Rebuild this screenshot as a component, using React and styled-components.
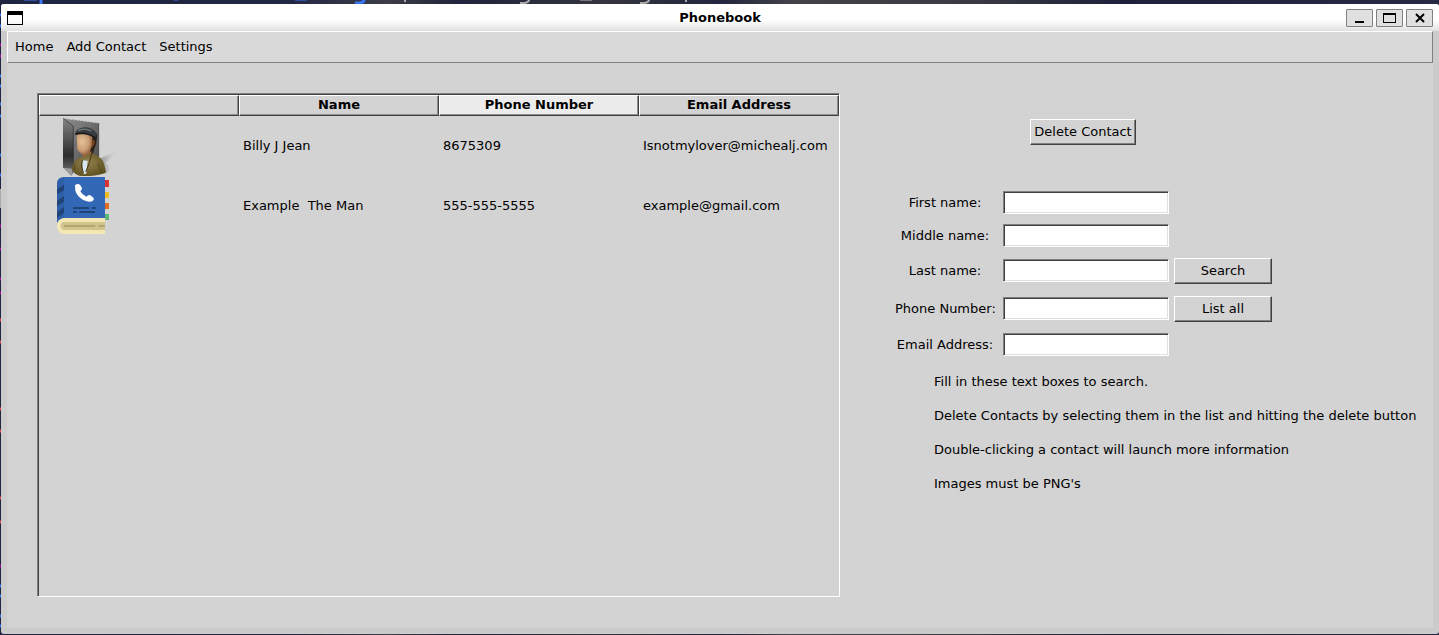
import React from "react";
import styled, { createGlobalStyle } from "styled-components";

const GlobalStyle = createGlobalStyle`
  * { box-sizing: border-box; }
  html, body, #root { height: 100%; }
  body {
    margin: 0;
    background: #242838;
    color: #000;
    font: 13px/16px "DejaVu Sans", sans-serif;
  }
  button, input { font: inherit; color: inherit; margin: 0; }
`;

const Desktop = styled.div`
  position: relative;
  display: flex;
  min-height: 100%;
  padding: 4px 0 1px 1px;
  background: linear-gradient(90deg, #1f2440, #222744 20%, #3d3d47 27%, #20243c 32%, #35353f 42%, #22263e 50%, #42424a 55%, #3a3a44 68%, #1d213a 78%, #262a42);
`;

const TerminalEdge = styled.svg`
  position: absolute;
  top: 0;
  left: 0;
`;

const Window = styled.main`
  position: relative;
  flex: 1;
  display: flex;
  flex-direction: column;
  background: #cbcbcb;
  border-radius: 3px;
`;

const TitleBar = styled.header`
  display: flex;
  align-items: center;
  height: 27px;
  padding: 0 6px;
  background: linear-gradient(#fff 60%, #e0e0e0);
  border-radius: 3px 3px 0 0;
`;

const TitleSide = styled.div`
  flex: 1;
  display: flex;
  gap: 3px;
  justify-content: ${(p) => (p.$end ? "flex-end" : "flex-start")};
`;

const Title = styled.h1`
  margin: 0;
  font-size: 13px;
  line-height: 16px;
  font-weight: bold;
`;

const ControlButton = styled.button`
  display: grid;
  place-items: center;
  width: 27px;
  height: 18px;
  padding: 0;
  background: #e0e0e0;
  border: 1px solid #808080;
  border-radius: 1px;
`;

const Body = styled.div`
  flex: 1;
  margin: 0 6px 6px;
  background: #d3d3d3;
`;

const MenuBar = styled.nav`
  display: flex;
  align-items: center;
  gap: 13px;
  height: 32px;
  padding: 0 7px;
  background: #d9d9d9;
  border: 1px solid;
  border-color: #fff #808080 #808080 #fff;
`;

const MenuItem = styled.button`
  padding: 0;
  background: none;
  border: 0;
`;

const Content = styled.div`
  display: flex;
  gap: 55px;
  padding: 30px 12px 30px 30px;
`;

const TableFrame = styled.section`
  flex: none;
  height: 504px;
  border: 1px solid;
  border-color: #808080 #fff #fff #808080;
  box-shadow: inset 1px 1px #404040;
  padding: 1px 0 0 1px;
`;

const Table = styled.table`
  width: 800px;
  table-layout: fixed;
  border-collapse: separate;
  border-spacing: 0;
`;

const HeadCell = styled.th`
  height: 21px;
  padding: 0 0 1px;
  line-height: 16px;
  background: ${(p) => (p.$active ? "#ececec" : "#d3d3d3")};
  border: 1px solid;
  border-color: #fff #404040 #404040 #fff;
  box-shadow: inset -1px -1px #8e8e8e;
`;

const Cell = styled.td`
  height: 60px;
  padding: 0 4px;
  white-space: pre;
`;

const PictureCell = styled.td`
  height: 60px;
  padding: 0 0 0 15px;
  svg { display: block; }
`;

const SidePanel = styled.section`
  flex: 1;
  min-width: 0;
  padding-top: 26px;
`;

const Form = styled.form`
  display: flex;
  flex-direction: column;
  width: 376px;
`;

const DeleteRow = styled.div`
  display: flex;
  justify-content: center;
  margin-bottom: 41px;
`;

const Button = styled.button`
  width: ${(p) => (p.$wide ? "106px" : "98px")};
  height: 26px;
  padding: 0;
  white-space: nowrap;
  background: #d3d3d3;
  border: 1px solid;
  border-color: #fff #404040 #404040 #fff;
  box-shadow: inset -1px -1px #808080;
`;

const Field = styled.div`
  display: grid;
  grid-template-columns: 108px 171px 98px;
  align-items: center;
  height: ${(p) => p.$height}px;
`;

const Label = styled.label`
  padding-right: 8px;
  text-align: center;
  white-space: nowrap;
`;

const TextBox = styled.input`
  width: 166px;
  height: 23px;
  padding: 0 4px;
  background: #fff;
  border: 1px solid;
  border-color: #808080 #fff #fff #808080;
  box-shadow: inset 1px 1px #404040, inset -1px -1px #e0e0e0;
  outline: none;
`;

const Hints = styled.div`
  padding: 4px 0 0 39px;
`;

const Hint = styled.p`
  margin: 0;
  line-height: 34px;
  white-space: nowrap;
`;

const Portrait = () => (
  <svg width="72" height="60" viewBox="42 78 216 180" role="img" aria-label="Billy J Jean">
    <defs>
      <linearGradient id="board" x1="0" y1="0" x2="1" y2="1">
        <stop offset="0" stopColor="#8e8e8e" />
        <stop offset="1" stopColor="#4a4a4a" />
      </linearGradient>
      <linearGradient id="side" x1="0" y1="0" x2="0" y2="1">
        <stop offset="0" stopColor="#858585" />
        <stop offset=".65" stopColor="#2c2c2c" />
        <stop offset="1" stopColor="#777" />
      </linearGradient>
      <radialGradient id="skin" cx=".35" cy=".4" r=".7">
        <stop offset="0" stopColor="#e6c19b" />
        <stop offset=".6" stopColor="#c99c72" />
        <stop offset="1" stopColor="#855532" />
      </radialGradient>
      <radialGradient id="coat" cx=".45" cy=".4" r=".65">
        <stop offset="0" stopColor="#93834f" />
        <stop offset="1" stopColor="#5d4e1e" />
      </radialGradient>
      <linearGradient id="shade">
        <stop offset="0" stopColor="#888" />
        <stop offset="1" stopColor="#ccc" stopOpacity="0" />
      </linearGradient>
    </defs>
    <path d="M177 207 232 182 197 220Q220 237 197 251H176Z" fill="url(#shade)" />
    <path d="M71 85 176 99V244H101V110Z" fill="url(#board)" />
    <path d="M71 85 176 99" stroke="#ccc" strokeWidth="3" strokeDasharray="5 5" />
    <path d="M176 99V200" stroke="#333" strokeWidth="2" />
    <path d="M69 84 101 109V246L94 257 69 232Z" fill="url(#side)" />
    <path d="M70 85 100 109V236" fill="none" stroke="#222" strokeWidth="2" />
    <path d="M69 233 98 236 95 257Z" fill="#9b9b9b" />
    <path d="M151 131 172 132 169 158 158 193 145 190Z" fill="#291d18" />
    <path d="M124 187 154 184 157 207 132 217Z" fill="#9a6340" />
    <path d="M110 134Q136 123 158 139L156 164Q152 193 133 194 120 193 112 178Z" fill="url(#skin)" />
    <path d="M157 149Q167 148 164 161L155 176Z" fill="#77431f" />
    <path d="M106 132Q106 116 132 112 158 110 171 132L166 144Q135 126 106 136Z" fill="#3a3d40" />
    <path d="M114 122Q132 112 155 123" fill="none" stroke="#737b80" strokeWidth="4" />
    <path d="M106 132Q135 123 166 143" fill="none" stroke="#151515" strokeWidth="4" />
    <path d="M123 202 154 190Q186 199 193 224L198 247Q173 260 127 258 108 258 95 239 98 210 123 202Z" fill="url(#coat)" />
    <path d="M127 211 143 212 139 251 129 253Z" fill="#d5e7f2" />
    <path d="M127 210 124 228 131 251M155 190Q151 217 137 246" fill="none" stroke="#463816" strokeWidth="3" />
    <path d="M174 220 185 251M105 221 103 240" stroke="#4d4014" strokeWidth="2" />
  </svg>
);

const PhoneBook = () => (
  <svg width="72" height="60" viewBox="42 258 216 180" role="img" aria-label="Example The Man">
    <path d="M72 261H195V385H72Q51 388 51 407V278Q52 263 72 261Z" fill="#2e5fa8" />
    <path d="M72 261H195V384H72Z" fill="#3268b5" />
    <path d="M54 296 72 284V301L51 313V300ZM51 332 72 318V335L51 349ZM51 366 72 351V369L51 384Z" fill="#204477" />
    <path d="M195 270H207V291H195Z" fill="#dc3436" />
    <path d="M195 306H207V324H195Z" fill="#efbd1f" />
    <path d="M195 339H207V357H195Z" fill="#e26d23" />
    <path d="M195 372H207V390H195Z" fill="#5fb878" />
    <path d="M105 286Q112 279 120 284L126 295Q126 300 121 304 127 315 139 320 144 314 150 315L161 324Q163 330 157 334 146 338 130 330 111 319 106 302Z" fill="#fff" />
    <path d="M99 354H147M156 354H167M99 366H110M118 366H165" stroke="#204477" strokeWidth="6" />
    <path d="M195 384H72Q51 387 51 408 52 431 72 432H195V420H75Q63 420 62 408 62 396 75 396H195Z" fill="#f3e7b4" />
    <path d="M195 396H75Q63 396 62 408 63 420 75 420H195Z" fill="#d1c48b" />
    <path d="M72 408H166M176 408H195" stroke="#a89d69" strokeWidth="5" />
  </svg>
);

const contacts = [
  { picture: <Portrait />, name: "Billy J Jean", phone: "8675309", email: "Isnotmylover@michealj.com" },
  { picture: <PhoneBook />, name: "Example  The Man", phone: "555-555-5555", email: "example@gmail.com" },
];

const fields = [
  { id: "first", label: "First name:", height: 33 },
  { id: "middle", label: "Middle name:", height: 33 },
  { id: "last", label: "Last name:", height: 37, action: "Search" },
  { id: "phone", label: "Phone Number:", height: 39, action: "List all" },
  { id: "email", label: "Email Address:", height: 33 },
];

const hints = [
  "Fill in these text boxes to search.",
  "Delete Contacts by selecting them in the list and hitting the delete button",
  "Double-clicking a contact will launch more information",
  "Images must be PNG's",
];

export default function App() {
  return (
    <>
      <GlobalStyle />
      <Desktop>
        <TerminalEdge width="720" height="635" aria-hidden="true">
          <path d="M24 0H37M174 0H178M295 0H307" stroke="#2d4f9e" strokeWidth="2" />
          <path d="M41 0V4M355 3H360Q364 2 364 0" stroke="#3976f5" strokeWidth="3" fill="none" />
          <path d="M405 0V2M520 3H525Q529 2 529 0M640 3H645Q649 2 649 0M686 0V2" stroke="#aaa" strokeWidth="2" fill="none" />
          <path d="M580 0H592" stroke="#777" strokeWidth="2" />
          <path d="M0 15h1M0 26h1M0 76h1M0 86h1M0 104h1M0 116h1M0 155h1M0 175h1M0 586h1M0 596h1M0 616h1M0 626h1" stroke="#3976f5" strokeWidth="3" />
          <path d="M0 45h1M0 56h1M0 226h1M0 249h1M0 279h1M0 293h1M0 566h1" stroke="#a0109a" strokeWidth="3" />
          <path d="M0 320h1M0 342h1M0 409h1M0 431h1M0 498h1M0 522h1" stroke="#e04a50" strokeWidth="3" />
          <path d="M0 189V208" stroke="#aaa" strokeWidth="2" />
        </TerminalEdge>
        <Window>
          <TitleBar>
            <TitleSide>
              <svg width="16" height="14" aria-hidden="true">
                <path d="M0 0H16V14H0ZM1 4V13H15V4Z" fillRule="evenodd" />
              </svg>
            </TitleSide>
            <Title>Phonebook</Title>
            <TitleSide $end>
              <ControlButton aria-label="Minimize">
                <svg width="13" height="10"><path d="M2 8H11V10H2Z" /></svg>
              </ControlButton>
              <ControlButton aria-label="Maximize">
                <svg width="13" height="10"><path d="M0 0H13V10H0ZM1 2V9H12V2Z" fillRule="evenodd" /></svg>
              </ControlButton>
              <ControlButton aria-label="Close">
                <svg width="10" height="10"><path d="M1 1 9 9M9 1 1 9" stroke="#000" strokeWidth="2" /></svg>
              </ControlButton>
            </TitleSide>
          </TitleBar>
          <Body>
            <MenuBar>
              <MenuItem>Home</MenuItem>
              <MenuItem>Add Contact</MenuItem>
              <MenuItem>Settings</MenuItem>
            </MenuBar>
            <Content>
              <TableFrame>
                <Table>
                  <thead>
                    <tr>
                      <HeadCell aria-label="Picture" />
                      <HeadCell>Name</HeadCell>
                      <HeadCell $active>Phone Number</HeadCell>
                      <HeadCell>Email Address</HeadCell>
                    </tr>
                  </thead>
                  <tbody>
                    {contacts.map((c) => (
                      <tr key={c.name}>
                        <PictureCell>{c.picture}</PictureCell>
                        <Cell>{c.name}</Cell>
                        <Cell>{c.phone}</Cell>
                        <Cell>{c.email}</Cell>
                      </tr>
                    ))}
                  </tbody>
                </Table>
              </TableFrame>
              <SidePanel>
                <Form onSubmit={(e) => e.preventDefault()}>
                  <DeleteRow>
                    <Button type="button" $wide>Delete Contact</Button>
                  </DeleteRow>
                  {fields.map((f) => (
                    <Field key={f.id} $height={f.height}>
                      <Label htmlFor={f.id}>{f.label}</Label>
                      <TextBox id={f.id} type="text" />
                      {f.action && <Button type="button">{f.action}</Button>}
                    </Field>
                  ))}
                </Form>
                <Hints>
                  {hints.map((h) => <Hint key={h}>{h}</Hint>)}
                </Hints>
              </SidePanel>
            </Content>
          </Body>
        </Window>
      </Desktop>
    </>
  );
}
